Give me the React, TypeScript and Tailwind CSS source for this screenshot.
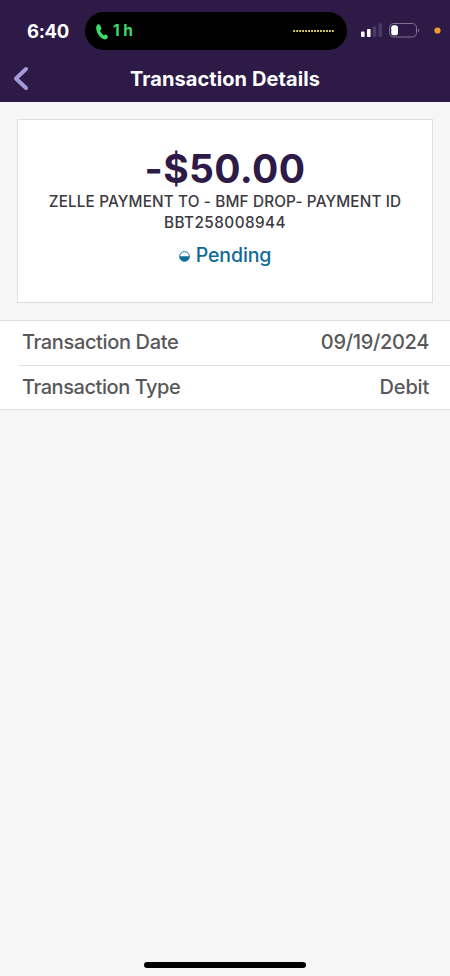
const rows = [
  { label: "Transaction Date", value: "09/19/2024", labelCls: "tracking-[-0.36px]", valueCls: "tracking-[-0.34px]" },
  { label: "Transaction Type", value: "Debit", labelCls: "tracking-[-0.44px]", valueCls: "tracking-[-0.2px]" },
];

function StatusBar() {
  return (
    <div className="flex h-[50px] items-start pt-[12px]">
      <div className="w-[85px] pl-[27px] text-[18.5px] leading-[38px] font-bold tracking-[-0.3px]">6:40</div>
      <div className="flex h-[38px] w-[262px] shrink-0 items-center rounded-full bg-black pr-[12px] pl-[11px]">
        <svg width="12" height="16" viewBox="0 0 12 16" className="mt-[1px]" fill="#3ddc68">
          <path d="M1.3.8C2.3 0 3.4.2 4 1.200L5.200 3.500C5.700 4.600 5.300 5.300 4.400 6.100C4.100 6.500 4.200 7 4.500 7.600C5.200 9 6 10.100 7.100 11C7.600 11.300 8 11.300 8.500 11C9.300 10.500 10 10.400 10.700 11L11.600 12.100C12.200 13 11.800 13.900 10.900 14.700C9.500 15.900 7.400 15.500 5.500 14C3.200 12.200 1.500 9.700.7 7.100C-.1 4.500 0 2.100 1.300.8Z" />
        </svg>
        <div className="ml-[5px] text-[15.500px] font-bold text-[#3ddc68]">1 h</div>
        <svg width="42" height="4" viewBox="0 0 42 4" className="ml-auto">
          <path d="M.2 2H41.500" stroke="#d9cb5c" strokeWidth="1.900" strokeDasharray="1.900 1.080" />
        </svg>
      </div>
      <svg width="103" height="38" viewBox="347 12 103 38" className="shrink-0">
        <rect x="361" y="31.500" width="3.600" height="5.500" rx="1" fill="#fff" />
        <rect x="367" y="29" width="3.600" height="8" rx="1" fill="#fff" />
        <rect x="372.700" y="26" width="3.600" height="11" rx="1" fill="#4b3966" />
        <rect x="378.500" y="23.500" width="3.600" height="13.500" rx="1" fill="#4b3966" />
        <rect x="389.500" y="23.500" width="27" height="13.500" rx="4.200" fill="none" stroke="#817493" />
        <rect x="391.200" y="25.200" width="6.800" height="10.100" rx="2.600" fill="#fff" />
        <path d="M418 28.200Q420.200 30.300 418 32.400Z" fill="#817493" />
        <circle cx="437.500" cy="30.500" r="3.100" fill="#f39a2c" />
      </svg>
    </div>
  );
}

export default function App() {
  return (
    <div className="flex h-[976px] w-[450px] flex-col overflow-hidden bg-[#f6f6f6] font-['Inter','Liberation_Sans',sans-serif]">
      <header className="h-[102px] bg-[#2e1a47] text-white">
        <StatusBar />
        <div className="grid h-[56px] grid-cols-[60px_1fr_60px] items-center">
          <svg width="16" height="25" viewBox="0 0 16 25" className="ml-[13px]" fill="none" stroke="#a59ad8" strokeWidth="4" strokeLinecap="round" strokeLinejoin="round">
            <path d="M13 3L3 12.500L13 22" />
          </svg>
          <h1 className="pt-[2px] text-center text-[20px] font-bold tracking-[0.080px] whitespace-nowrap">Transaction Details</h1>
        </div>
      </header>

      <section className="mx-[17px] mt-[17px] h-[184px] border border-[#dedede] bg-white pt-[27px] text-center">
        <div className="text-[39px] leading-[44px] font-bold tracking-[0.35px] text-[#2e1a47]">-$50.00</div>
        <div className="text-[15.300px] leading-[21px] font-medium whitespace-nowrap text-[#3d3a3f]">
          <div className="tracking-[0.140px]">ZELLE PAYMENT TO - BMF DROP- PAYMENT ID</div>
          <div className="tracking-[0.450px]">BBT258008944</div>
        </div>
        <div className="mt-[9px] flex items-center justify-center gap-[6px] text-[19.500px] leading-[26px] font-medium text-[#106a98]">
          <svg width="11" height="11" viewBox="0 0 11 11" className="mt-[2px]">
            <circle cx="5.500" cy="5.500" r="4.900" fill="#fff" stroke="currentColor" strokeWidth="0.900" />
            <path d="M.5 5.200H10.500A5 5 0 0 1 .5 5.200Z" fill="currentColor" />
          </svg>
          <span className="tracking-[-0.100px]">Pending</span>
        </div>
      </section>

      <section className="mt-[17px] border-y border-[#dedede] bg-white pl-[19px] text-[20px] font-medium text-[#58585a]">
        {rows.map((r) => (
          <div key={r.label} className="flex h-[44px] items-center justify-between border-[#dedede] pr-[21px] pb-[2px] pl-[3px] last:border-t">
            <span className={r.labelCls}>{r.label}</span>
            <span className={r.valueCls}>{r.value}</span>
          </div>
        ))}
      </section>

      <div className="mx-auto mt-auto mb-[8px] h-[6px] w-[162px] rounded-full bg-black" />
    </div>
  );
}
